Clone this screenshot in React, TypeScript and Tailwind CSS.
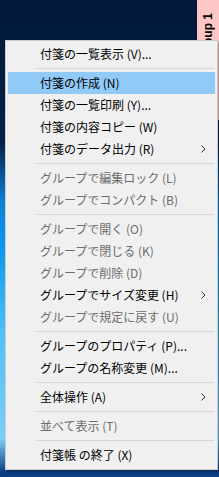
import React from 'react';

type Item =
  | { kind: 'item'; label: string; disabled?: boolean; active?: boolean; sub?: boolean }
  | { kind: 'sep' };

const items: Item[] = [
  { kind: 'item', label: '付箋の一覧表示 (V)...' },
  { kind: 'sep' },
  { kind: 'item', label: '付箋の作成 (N)', active: true },
  { kind: 'item', label: '付箋の一覧印刷 (Y)...' },
  { kind: 'item', label: '付箋の内容コピー (W)' },
  { kind: 'item', label: '付箋のデータ出力 (R)', sub: true },
  { kind: 'sep' },
  { kind: 'item', label: 'グループで編集ロック (L)', disabled: true },
  { kind: 'item', label: 'グループでコンパクト (B)', disabled: true },
  { kind: 'sep' },
  { kind: 'item', label: 'グループで開く (O)', disabled: true },
  { kind: 'item', label: 'グループで閉じる (K)', disabled: true },
  { kind: 'item', label: 'グループで削除 (D)', disabled: true },
  { kind: 'item', label: 'グループでサイズ変更 (H)', sub: true },
  { kind: 'item', label: 'グループで規定に戻す (U)', disabled: true },
  { kind: 'sep' },
  { kind: 'item', label: 'グループのプロパティ (P)...' },
  { kind: 'item', label: 'グループの名称変更 (M)...' },
  { kind: 'sep' },
  { kind: 'item', label: '全体操作 (A)', sub: true },
  { kind: 'sep' },
  { kind: 'item', label: '並べて表示 (T)', disabled: true },
  { kind: 'sep' },
  { kind: 'item', label: '付箋帳 の終了 (X)' },
];

const Chevron = () => (
  <svg width="5" height="8" viewBox="0 0 5 8" className="absolute right-[9px] top-[7px]">
    <path d="M0.5 0.5 L4 4 L0.5 7.5" fill="none" stroke="#333" strokeWidth="1" />
  </svg>
);

export default function App() {
  return (
    <div
      className="relative w-[219px] h-[477px] overflow-hidden bg-[linear-gradient(180deg,#01193a_0%,#02214a_30%,#0b7fd6_42%,#0a98ee_52%,#4fc0f8_70%,#7ccdf9_92%,#0a3f86_99%)]"
      style={{ fontFamily: '"Noto Sans CJK JP", "Noto Sans", sans-serif' }}
    >
      {/* sticky note group tab */}
      <div className="absolute left-[197px] top-0 w-[22px] h-[120px] bg-[#ffc6c6] flex justify-center">
        <span
          className="[writing-mode:vertical-rl] rotate-180 text-[12px] font-bold text-black leading-none self-start mt-[13px]"
          style={{ fontFamily: '"Liberation Sans", sans-serif' }}
        >
          Group 1
        </span>
      </div>

      {/* context menu */}
      <div className="absolute left-[5px] top-[40px] w-[213px] bg-[#f0f0f0] border border-[#cccccc] shadow-[2px_2px_2px_rgba(0,0,0,0.35)] px-[2px] pt-[2px] pb-[3px]">
        {items.map((it, i) =>
          it.kind === 'sep' ? (
            <div key={i} className="h-[7px] flex items-center pl-[28px] pr-[1px]">
              <div className="h-px w-full bg-[#d7d7d7]" />
            </div>
          ) : (
            <div
              key={i}
              className={`relative h-[22px] leading-[22px] pl-[32px] text-[12px] whitespace-nowrap ${
                it.active ? 'bg-[#91c9f7]' : ''
              } ${it.disabled ? 'text-[#6d6d6d]' : 'text-black'}`}
            >
              {it.label}
              {it.sub && <Chevron />}
            </div>
          )
        )}
      </div>
    </div>
  );
}
